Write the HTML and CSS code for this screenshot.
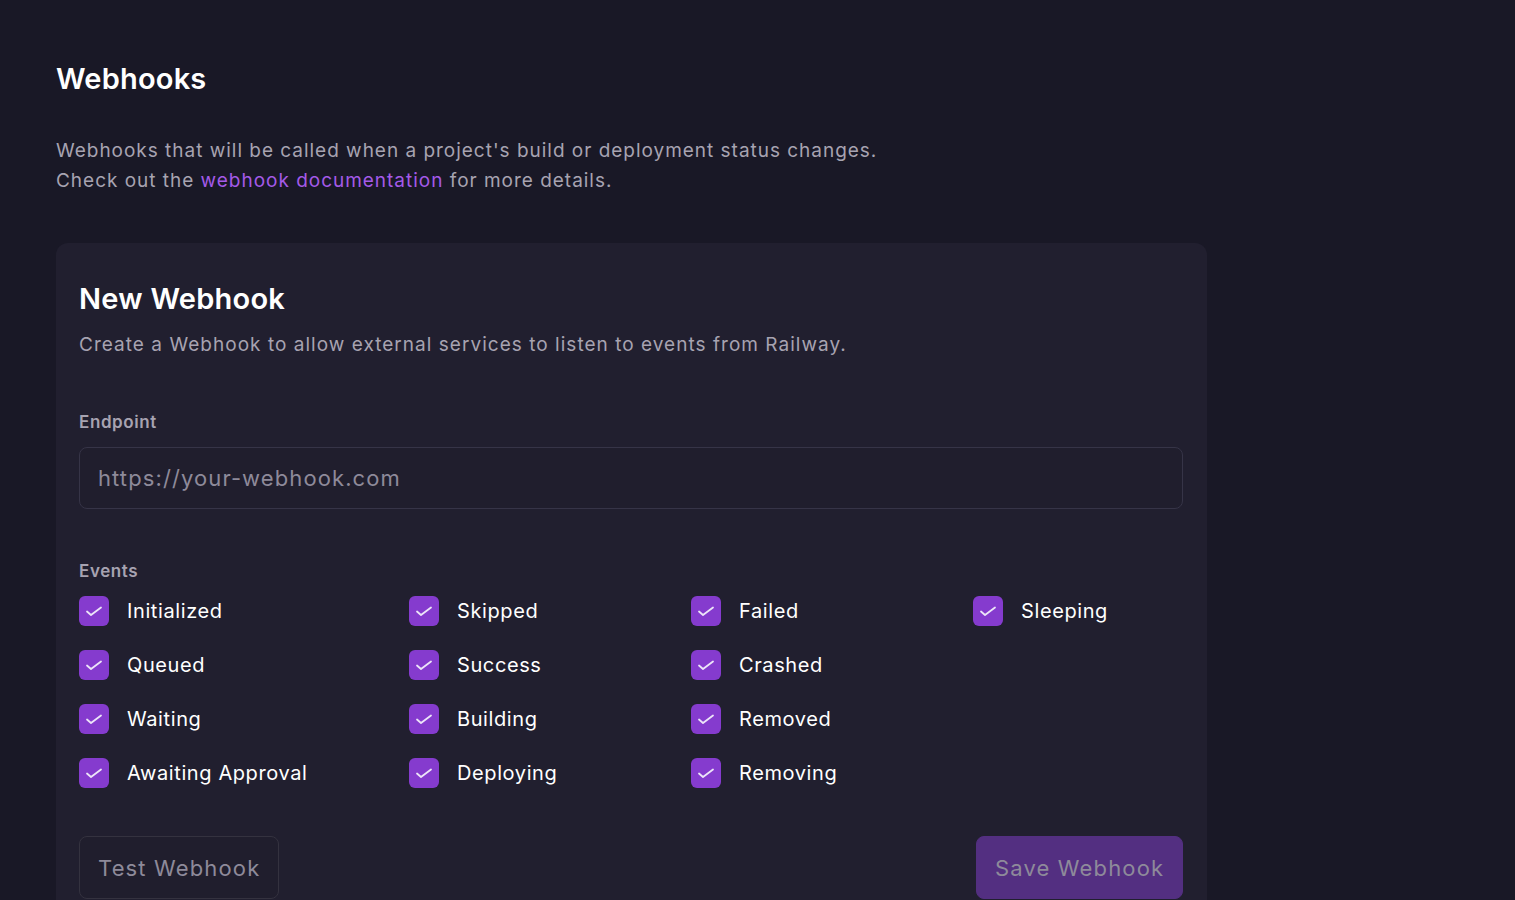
FILE: index.html
```html
<!DOCTYPE html>
<html>
<head>
<meta charset="utf-8">
<link rel="stylesheet" href="styles.css">
</head>
<body>
<main class="page">
  <h1 class="title">Webhooks</h1>
  <p class="desc">Webhooks that will be called when a project's build or deployment status changes.<br>Check out the <a class="link" href="#">webhook documentation</a> for more details.</p>
  <section class="card">
    <h2 class="card-title">New Webhook</h2>
    <p class="card-sub">Create a Webhook to allow external services to listen to events from Railway.</p>
    <label class="label">Endpoint</label>
    <div class="input">https://your-webhook.com</div>
    <div class="label events-label">Events</div>
    <div class="events">
      <div class="col">
        <div class="ev"><span class="cb"><svg viewBox="0 0 30 30"><path d="M8 15.5l4 3.5 10-7.5"/></svg></span>Initialized</div>
        <div class="ev"><span class="cb"><svg viewBox="0 0 30 30"><path d="M8 15.5l4 3.5 10-7.5"/></svg></span>Queued</div>
        <div class="ev"><span class="cb"><svg viewBox="0 0 30 30"><path d="M8 15.5l4 3.5 10-7.5"/></svg></span>Waiting</div>
        <div class="ev"><span class="cb"><svg viewBox="0 0 30 30"><path d="M8 15.5l4 3.5 10-7.5"/></svg></span>Awaiting Approval</div>
      </div>
      <div class="col">
        <div class="ev"><span class="cb"><svg viewBox="0 0 30 30"><path d="M8 15.5l4 3.5 10-7.5"/></svg></span>Skipped</div>
        <div class="ev"><span class="cb"><svg viewBox="0 0 30 30"><path d="M8 15.5l4 3.5 10-7.5"/></svg></span>Success</div>
        <div class="ev"><span class="cb"><svg viewBox="0 0 30 30"><path d="M8 15.5l4 3.5 10-7.5"/></svg></span>Building</div>
        <div class="ev"><span class="cb"><svg viewBox="0 0 30 30"><path d="M8 15.5l4 3.5 10-7.5"/></svg></span>Deploying</div>
      </div>
      <div class="col">
        <div class="ev"><span class="cb"><svg viewBox="0 0 30 30"><path d="M8 15.5l4 3.5 10-7.5"/></svg></span>Failed</div>
        <div class="ev"><span class="cb"><svg viewBox="0 0 30 30"><path d="M8 15.5l4 3.5 10-7.5"/></svg></span>Crashed</div>
        <div class="ev"><span class="cb"><svg viewBox="0 0 30 30"><path d="M8 15.5l4 3.5 10-7.5"/></svg></span>Removed</div>
        <div class="ev"><span class="cb"><svg viewBox="0 0 30 30"><path d="M8 15.5l4 3.5 10-7.5"/></svg></span>Removing</div>
      </div>
      <div class="col">
        <div class="ev"><span class="cb"><svg viewBox="0 0 30 30"><path d="M8 15.5l4 3.5 10-7.5"/></svg></span>Sleeping</div>
      </div>
    </div>
    <div class="actions">
      <button class="btn btn-test">Test Webhook</button>
      <button class="btn btn-save">Save Webhook</button>
    </div>
  </section>
</main>
</body>
</html>
```
FILE: styles.css
```css
html, body {
  margin: 0;
  padding: 0;
  background: #191826;
  overflow: hidden;
}
body {
  font-family: Inter, "Noto Sans", sans-serif;
  color: #ffffff;
}
.page {
  padding: 59px 56px 0 56px;
  width: 1151px;
}
.title {
  margin: 0;
  font-size: 29px;
  font-weight: 600;
  line-height: 40px;
  letter-spacing: 0.2px;
}
.desc {
  margin: 37px 0 0 0;
  font-size: 19px;
  line-height: 30px;
  color: #a7a3b1;
  letter-spacing: 0.98px;
}
.link {
  color: #a45ae8;
  text-decoration: none;
}
.card {
  margin-top: 47px;
  background: #211f2f;
  border-radius: 12px;
  padding: 36px 24px 0 23px;
  height: 700px;
}
.card-title {
  margin: 0;
  font-size: 29px;
  font-weight: 600;
  line-height: 40px;
  letter-spacing: 0.25px;
}
.card-sub {
  margin: 11px 0 0 0;
  font-size: 19px;
  line-height: 30px;
  color: #a7a3b1;
  letter-spacing: 1.03px;
}
.label {
  display: block;
  margin-top: 50px;
  font-size: 17px;
  font-weight: 600;
  line-height: 24px;
  color: #a7a3b1;
  letter-spacing: 0.6px;
}
.input {
  margin-top: 13px;
  height: 60px;
  border: 1px solid #363447;
  border-radius: 8px;
  box-sizing: content-box;
  padding: 0 18px;
  display: flex;
  align-items: center;
  font-size: 22px;
  color: #8e8a9a;
  letter-spacing: 1.1px;
  background: #201e2d;
}
.events-label {
  margin-top: 50px;
}
.events {
  display: grid;
  grid-template-columns: 330px 282px 282px auto;
  margin-top: 1px;
}
.col {
  display: flex;
  flex-direction: column;
}
.ev {
  display: flex;
  align-items: center;
  height: 54px;
  font-size: 20px;
  letter-spacing: 0.6px;
  color: #ffffff;
}
.cb {
  width: 30px;
  height: 30px;
  border-radius: 6px;
  background: #853bce;
  margin-right: 18px;
  display: block;
  flex: none;
}
.cb svg {
  display: block;
  width: 30px;
  height: 30px;
  fill: none;
  stroke: #ece4f8;
  stroke-width: 1.8;
  stroke-linecap: round;
  stroke-linejoin: round;
}
.actions {
  margin-top: 36px;
  display: flex;
  justify-content: space-between;
}
.btn {
  font-family: Inter, "Noto Sans", sans-serif;
  height: 63px;
  border-radius: 8px;
  font-size: 22px;
  letter-spacing: 1.15px;
  padding: 0 18px;
  color: #8e8a9a;
  cursor: pointer;
  text-align: left;
  white-space: nowrap;
  box-sizing: border-box;
}
.btn-test {
  background: #201e2d;
  border: 1px solid #34323f;
  width: 200px;
}
.btn-save {
  background: #532f81;
  border: 1px solid #532f81;
  width: 207px;
}
```
